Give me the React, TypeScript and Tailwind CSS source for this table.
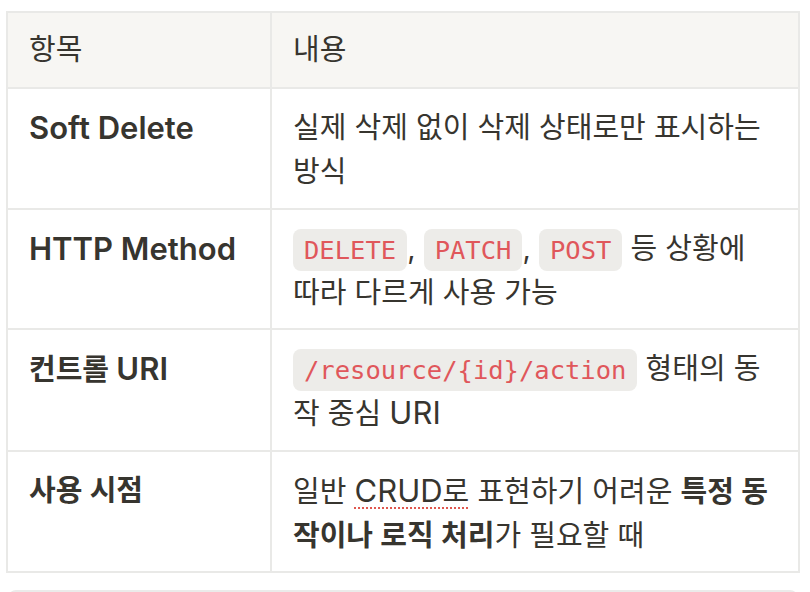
import React from "react";

// latin words get a bigger size so they sit next to the CJK fallback like in the reference
const L = ({ children }: { children: React.ReactNode }) => <span className="text-[31px]">{children}</span>;

function Code({ children }: { children: React.ReactNode }) {
  return (
    <code className="font-['DejaVu_Sans_Mono',monospace] text-[25.5px] leading-none text-[#e0575b] bg-[#edece9] rounded-[8px] px-[11px] py-[6px]">
      {children}
    </code>
  );
}

const rows = [
  {
    title: <L>Soft Delete</L>,
    body: (
      <>
        실제 삭제 없이 삭제 상태로만 표시하는
        <br />
        방식
      </>
    ),
  },
  {
    title: <L>HTTP Method</L>,
    body: (
      <>
        <Code>DELETE</Code>, <Code>PATCH</Code>, <Code>POST</Code> 등 상황에
        <br />
        따라 다르게 사용 가능
      </>
    ),
  },
  {
    title: (
      <>
        컨트롤 <L>URI</L>
      </>
    ),
    body: (
      <>
        <Code>/resource/{"{id}"}/action</Code> 형태의 동
        <br />작 중심 <L>URI</L>
      </>
    ),
  },
  {
    title: <>사용 시점</>,
    body: (
      <>
        일반{" "}
        <span className="underline decoration-dotted decoration-[#e0584f] decoration-2 underline-offset-[6px]">
          <L>CRUD</L>로
        </span>{" "}
        표현하기 어려운 <b className="font-semibold">특정 동</b>
        <br />
        <b className="font-semibold">작이나 로직 처리</b>가 필요할 때
      </>
    ),
  },
];

export default function App() {
  return (
    <div className="w-[810px] h-[592px] overflow-hidden bg-white pl-[6px] pt-[11px] text-[#37352f] font-['Inter','Noto_Sans_CJK_KR',sans-serif] text-[29px] leading-[44px]">
      <table className="w-[794px] table-fixed border-collapse border-2 border-[#e9e9e7]">
        <colgroup>
          <col className="w-[264px]" />
          <col />
        </colgroup>
        <thead>
          <tr className="bg-[#f7f6f3]">
            <th className="border-2 border-[#e9e9e7] px-[21px] pt-[15px] pb-[15px] text-left font-normal align-top">
              항목
            </th>
            <th className="border-2 border-[#e9e9e7] px-[21px] pt-[15px] pb-[15px] text-left font-normal align-top">
              내용
            </th>
          </tr>
        </thead>
        <tbody>
          {rows.map((row, i) => (
            <tr key={i}>
              <td className="border-2 border-[#e9e9e7] px-[21px] pt-[17px] pb-[13.5px] align-top font-semibold">
                {row.title}
              </td>
              <td className="border-2 border-[#e9e9e7] px-[21px] pt-[17px] pb-[13.5px] align-top whitespace-nowrap">
                {row.body}
              </td>
            </tr>
          ))}
        </tbody>
      </table>
      <div className="mt-[17px] ml-[2px] w-[790px] h-[20px] border-t-2 border-x-2 border-[#ebebea] rounded-t-[8px]" />
    </div>
  );
}
